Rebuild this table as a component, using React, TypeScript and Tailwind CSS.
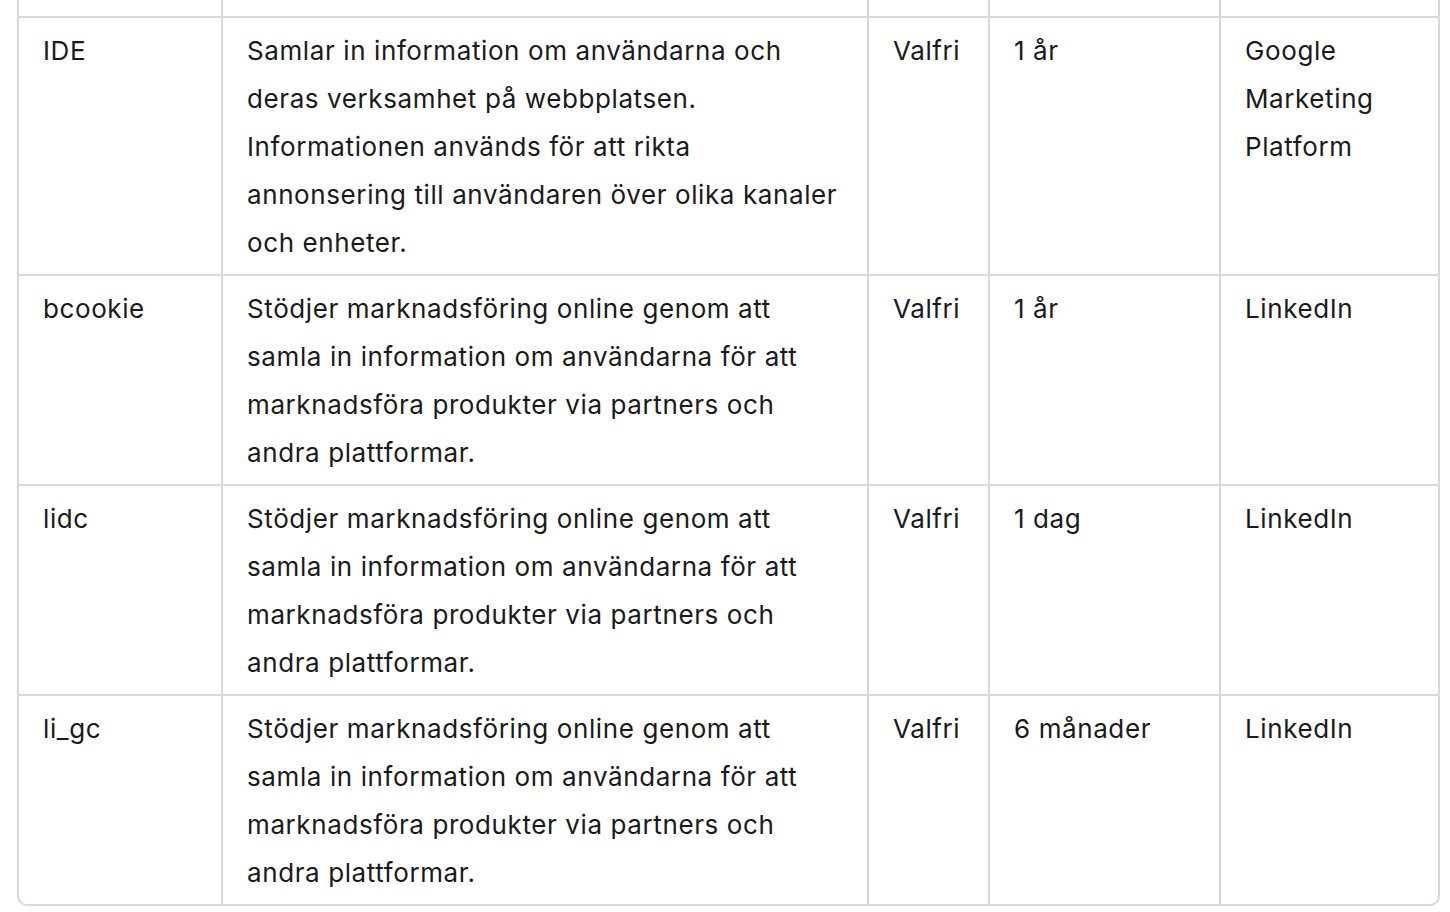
import React from "react";

type Cookie = {
  name: string;
  purpose: string;
  type: string;
  duration: string;
  provider: string;
};

const cookies: Cookie[] = [
  {
    name: "IDE",
    purpose:
      "Samlar in information om användarna och deras verksamhet på webbplatsen. Informationen används för att rikta annonsering till användaren över olika kanaler och enheter.",
    type: "Valfri",
    duration: "1 år",
    provider: "Google Marketing Platform",
  },
  {
    name: "bcookie",
    purpose:
      "Stödjer marknadsföring online genom att samla in information om användarna för att marknadsföra produkter via partners och andra plattformar.",
    type: "Valfri",
    duration: "1 år",
    provider: "LinkedIn",
  },
  {
    name: "lidc",
    purpose:
      "Stödjer marknadsföring online genom att samla in information om användarna för att marknadsföra produkter via partners och andra plattformar.",
    type: "Valfri",
    duration: "1 dag",
    provider: "LinkedIn",
  },
  {
    name: "li_gc",
    purpose:
      "Stödjer marknadsföring online genom att samla in information om användarna för att marknadsföra produkter via partners och andra plattformar.",
    type: "Valfri",
    duration: "6 månader",
    provider: "LinkedIn",
  },
];

const cols = "grid grid-cols-[202px_646px_121px_231px_219px]";
const cell = "px-[24px] pt-[9px] pb-[7px] border-l-2 border-[#d9d9d9] first:border-l-0";

export default function App() {
  return (
    <div className="min-h-screen bg-white text-[#1a1a1a] font-['Inter','Noto_Sans',sans-serif]">
      <div className="ml-[17px] w-[1423px] border-2 border-t-0 border-[#d9d9d9] rounded-b-[10px] overflow-hidden">
        {/* tail of the row above */}
        <div className={cols}>
          {[0, 1, 2, 3, 4].map((i) => (
            <div key={i} className="h-[16px] border-l-2 border-[#d9d9d9] first:border-l-0" />
          ))}
        </div>

        {cookies.map((c) => (
          <div
            key={c.name}
            className={`${cols} border-t-2 border-[#d9d9d9] text-[26px] leading-[48px] tracking-[0.6px]`}
          >
            <div className={cell}>{c.name}</div>
            <div className={cell}>{c.purpose}</div>
            <div className={cell}>{c.type}</div>
            <div className={cell}>{c.duration}</div>
            <div className={cell}>{c.provider}</div>
          </div>
        ))}
      </div>
    </div>
  );
}
